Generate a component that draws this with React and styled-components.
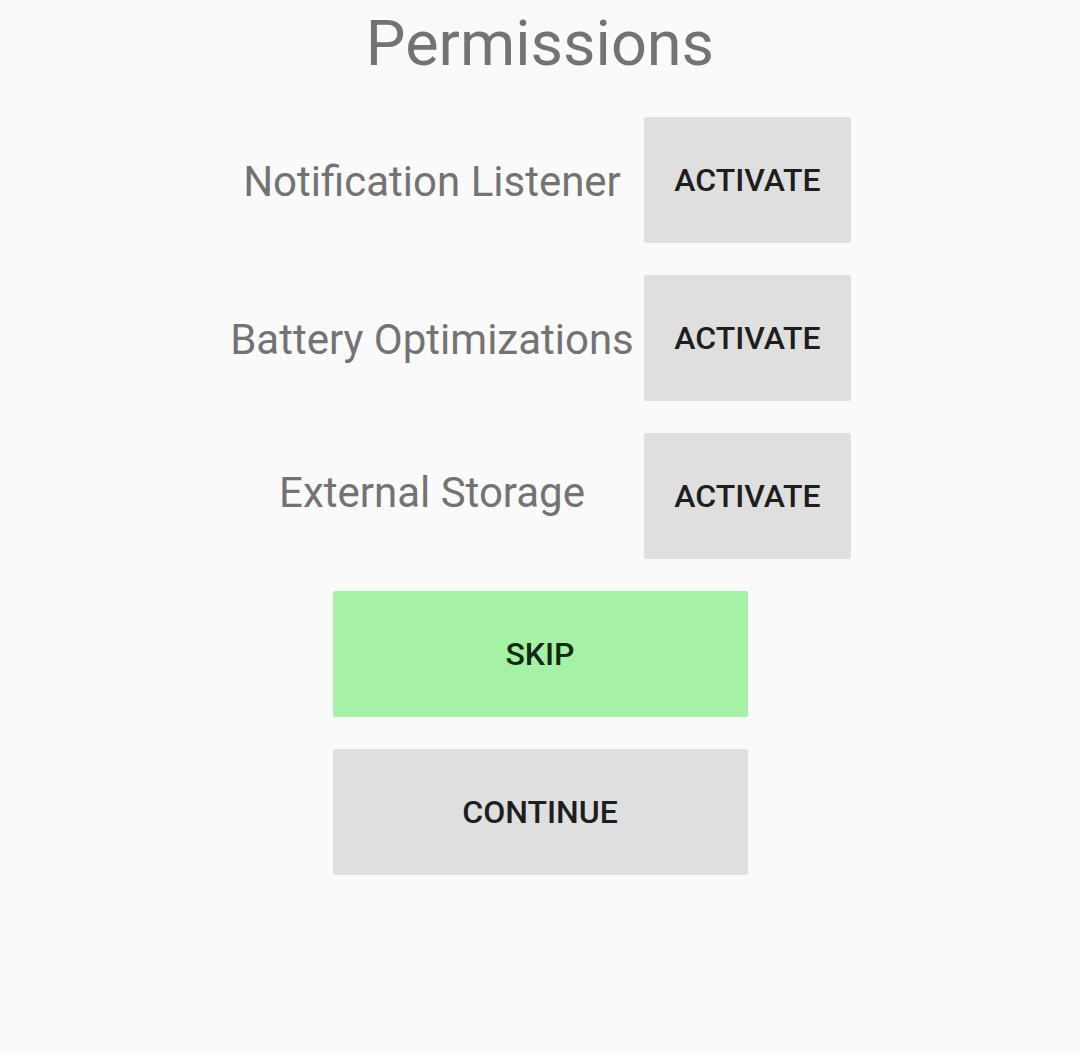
import React from "react";
import styled, { createGlobalStyle } from "styled-components";

const Global = createGlobalStyle`
  html, body { margin: 0; padding: 0; background: #fafafa; }
  body { font-family: Roboto, "Noto Sans", sans-serif; }
`;

const Screen = styled.div`
  width: 1080px;
  height: 1053px;
  background: #fafafa;
  display: flex;
  flex-direction: column;
  align-items: center;
`;

const Title = styled.h1`
  margin: 8px 0 37px;
  font-size: 63px;
  font-weight: 400;
  line-height: 72px;
  color: #737373;
`;

const Rows = styled.div`
  display: flex;
  flex-direction: column;
  gap: 32px;
  margin-left: -9px;
`;

const Row = styled.div`
  display: grid;
  grid-template-columns: 424px 207px;
  align-items: center;
`;

const Label = styled.span`
  text-align: center;
  font-size: 42px;
  color: #737373;
  padding-top: ${(p) => (p.$lift ? 0 : 2)}px;
  padding-bottom: ${(p) => (p.$lift ? 7 : 0)}px;
`;

const Button = styled.button`
  border: none;
  border-radius: 2px;
  width: ${(p) => p.$w}px;
  height: 126px;
  background: ${(p) => (p.$green ? "#a5f1a5" : "#dfdfdf")};
  color: ${(p) => (p.$green ? "#112a12" : "#1e1e1e")};
  font-family: Roboto, "Noto Sans", sans-serif;
  font-size: 32px;
  font-weight: 500;
  letter-spacing: 0;
  padding: 0;
`;

const Actions = styled.div`
  display: flex;
  flex-direction: column;
  gap: 32px;
  margin-top: 32px;
`;

const items = [
  { t: "Notification Listener" },
  { t: "Battery Optimizations" },
  { t: "External Storage", lift: true },
];

export default function App() {
  return (
    <Screen>
      <Global />
      <Title>Permissions</Title>
      <Rows>
        {items.map((it) => (
          <Row key={it.t}>
            <Label $lift={it.lift}>{it.t}</Label>
            <Button $w={207}>ACTIVATE</Button>
          </Row>
        ))}
      </Rows>
      <Actions>
        <Button $w={415} $green>SKIP</Button>
        <Button $w={415}>CONTINUE</Button>
      </Actions>
    </Screen>
  );
}
